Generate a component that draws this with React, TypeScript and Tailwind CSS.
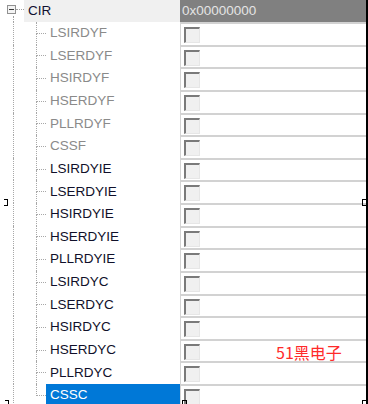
import React from "react";

const rows: { label: string; disabled: boolean }[] = [
  { label: "LSIRDYF", disabled: true },
  { label: "LSERDYF", disabled: true },
  { label: "HSIRDYF", disabled: true },
  { label: "HSERDYF", disabled: true },
  { label: "PLLRDYF", disabled: true },
  { label: "CSSF", disabled: true },
  { label: "LSIRDYIE", disabled: false },
  { label: "LSERDYIE", disabled: false },
  { label: "HSIRDYIE", disabled: false },
  { label: "HSERDYIE", disabled: false },
  { label: "PLLRDYIE", disabled: false },
  { label: "LSIRDYC", disabled: false },
  { label: "LSERDYC", disabled: false },
  { label: "HSIRDYC", disabled: false },
  { label: "HSERDYC", disabled: false },
  { label: "PLLRDYC", disabled: false },
  { label: "CSSC", disabled: false },
];

function CheckBox() {
  return (
    <div className="ml-[3px] mt-[3px] h-[16px] w-[16px] border-t-2 border-l-2 border-r border-b border-t-[#7a7a7a] border-l-[#7a7a7a] border-r-[#e6e6e6] border-b-[#e6e6e6] bg-[#f0f0f0]" />
  );
}

export default function App() {
  return (
    <div
      className="relative h-[404px] w-[368px] overflow-hidden bg-white text-[13.5px]"
      style={{ fontFamily: '"Liberation Sans", Arial, sans-serif' }}
    >
      {/* header row */}
      <div className="flex h-[22px]">
        <div className="flex w-[180px]">
          <div className="flex w-[24px] flex-col">
            <div className="flex h-[16px] items-end">
              <div className="mb-[2px] ml-[7px] flex h-[9px] w-[9px] items-center justify-center border border-[#919191] bg-[#f4f4f4]">
                <div className="h-px w-[5px] bg-[#3a3a3a]" />
              </div>
              <div className="mb-[6px] w-[8px] border-t border-dotted border-[#a0a0a0]" />
            </div>
            <div className="ml-[13px] flex-1 border-l border-dotted border-[#a0a0a0]" />
          </div>
          <div className="flex h-full flex-1 items-center bg-[#f0f0f0] pl-[4px] text-[#101030]">CIR</div>
        </div>
        <div className="flex flex-1 items-center bg-[#808080] pl-[2px] text-[#e4e4e4]">0x00000000</div>
        <div className="w-[2px] bg-black" />
      </div>
      {rows.map((r, i) => {
        const last = i === rows.length - 1;
        return (
          <div key={r.label} className="flex h-[22.625px]">
            <div className="flex w-[180px]">
              <div className="ml-[13px] w-[23px] border-l border-dotted border-[#a8a8a8]" />
              <div className="flex w-[10px] flex-col">
                <div className="flex-1 border-b border-l border-dotted border-[#a8a8a8]" />
                <div
                  className={
                    last ? "flex-1" : "flex-1 border-l border-dotted border-[#a8a8a8]"
                  }
                />
              </div>
              <div
                className={
                  last
                    ? "flex h-full flex-1 items-center bg-[#0078d7] pl-[4px] text-white"
                    : r.disabled
                    ? "flex h-full flex-1 items-center pl-[4px] text-[#8a8a8a]"
                    : "flex h-full flex-1 items-center pl-[4px] text-[#10102a]"
                }
              >
                {r.label}
              </div>
            </div>
            <div className="flex flex-1 items-start border-l border-t-2 border-l-[#d4d4d4] border-t-[#d2d2d2]">
              <CheckBox />
              {r.label === "HSERDYC" && (
                <span
                  className="ml-[76px] mt-[1px] text-[16px] leading-[20px] text-[#ff2a2a]"
                  style={{ fontFamily: '"Noto Sans CJK SC", "Liberation Sans", sans-serif' }}
                >
                  51黑电子
                </span>
              )}
            </div>
            <div className="w-[2px] bg-black" />
          </div>
        );
      })}
      {/* selection handles */}
      <div className="absolute left-[4px] top-[199px] h-[7px] w-[4px] border-y border-r border-black" />
      <div className="absolute left-[362px] top-[199px] h-[7px] w-[5px] border-y border-l border-black" />
      <div className="absolute left-[5px] top-[400px] h-[4px] w-[4px] border-t border-r border-black" />
      <div className="absolute left-[182px] top-[400px] h-[4px] w-[5px] border-t border-l border-r border-black" />
      <div className="absolute left-[362px] top-[400px] h-[4px] w-[4px] border-t border-l border-black" />
    </div>
  );
}
